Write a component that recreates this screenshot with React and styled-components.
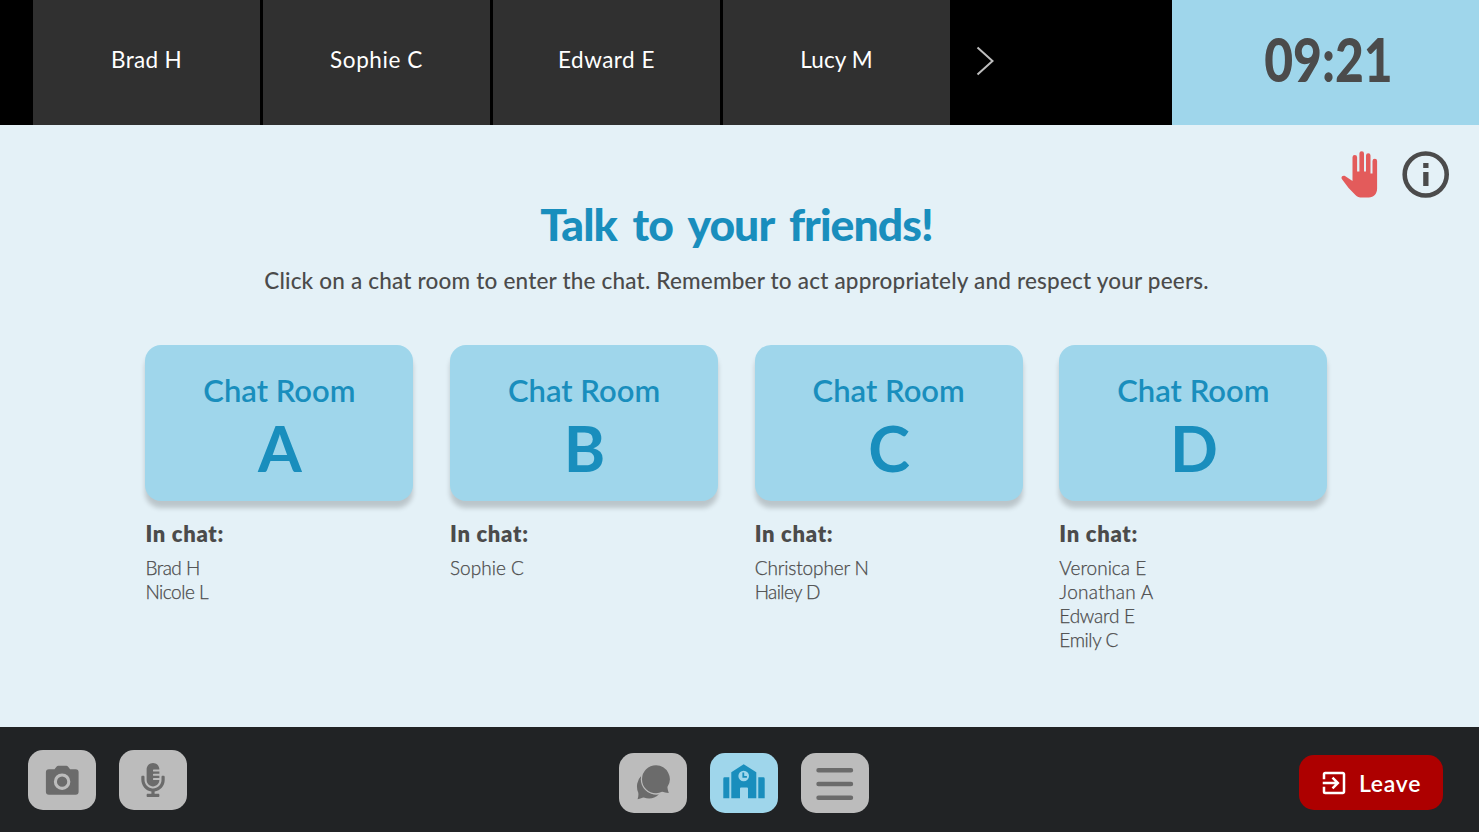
import React from "react";
import styled, { createGlobalStyle } from "styled-components";
import { FaMicrophoneAlt } from "react-icons/fa";
import { MdOutlineExitToApp } from "react-icons/md";

const blue = "#198ebd";
const sky = "#9fd6eb";
const ink = "#4b4b4b";

const GlobalStyle = createGlobalStyle`
  * { box-sizing: border-box; }
  body { margin: 0; background: #e4f1f7; font-family: Lato, "Liberation Sans", sans-serif; }
  h1, h2, p, ul { margin: 0; padding: 0; font-weight: inherit; }
  button { border: 0; padding: 0; font: inherit; cursor: pointer; }
  svg { display: block; }
`;

const Screen = styled.div`
  width: 100%;
  height: 832px;
  display: flex;
  flex-direction: column;
  overflow: hidden;
`;

const TopBar = styled.header`
  height: 125px;
  flex: none;
  display: flex;
  background: #000;
  padding-left: 33px;
`;

const Participants = styled.div`
  display: flex;
  gap: 3px;
`;

const Participant = styled.div`
  width: 227px;
  display: flex;
  align-items: center;
  justify-content: center;
  padding-bottom: 6px;
  background: #303030;
  color: #fff;
  font-size: 22.5px;
  letter-spacing: ${(p) => p.$spacing}px;
  white-space: nowrap;
`;

const NextButton = styled.button`
  width: 70px;
  height: 121px;
  display: flex;
  align-items: center;
  justify-content: center;
  background: none;
`;

const Clock = styled.div`
  width: 307px;
  margin-left: auto;
  display: flex;
  align-items: center;
  justify-content: center;
  padding: 0 0 7px 6px;
  background: ${sky};
  color: ${ink};
  font-size: 60px;
  font-weight: 900;
`;

const Digits = styled.span`
  transform: scaleX(0.83);
`;

const Main = styled.main`
  flex: 1;
  display: flex;
  flex-direction: column;
`;

const Actions = styled.div`
  height: 73px;
  padding: 26px 29px 0 0;
  display: flex;
  justify-content: flex-end;
  gap: 24px;
`;

const Title = styled.h1`
  margin-right: 6px;
  height: 58px;
  line-height: 51px;
  text-align: center;
  color: ${blue};
  font-size: 44.5px;
  font-weight: 900;
  letter-spacing: -0.95px;
  word-spacing: 6px;
  white-space: nowrap;
`;

const Subtitle = styled.p`
  margin-right: 6px;
  height: 89px;
  line-height: 50px;
  text-align: center;
  color: ${ink};
  font-size: 22.5px;
  font-weight: 500;
  letter-spacing: 0.2px;
  white-space: nowrap;
`;

const Rooms = styled.div`
  display: grid;
  grid-template-columns: repeat(4, 268px);
  column-gap: 36.67px;
  padding-left: 145.4px;
`;

const Room = styled.section`
  display: flex;
  flex-direction: column;
`;

const RoomCard = styled.button`
  height: 156px;
  border-radius: 16px;
  background: ${sky};
  box-shadow: 0 7px 5px rgba(0, 0, 0, 0.18);
  color: ${blue};
  display: flex;
  flex-direction: column;
  align-items: center;
  padding-top: 25px;
`;

const RoomLabel = styled.span`
  height: 42px;
  line-height: 40px;
  font-size: 31px;
  font-weight: 600;
`;

const RoomLetter = styled.span`
  line-height: 71px;
  font-size: 63px;
  font-weight: 700;
  padding-left: 1px;
`;

const InChat = styled.h2`
  margin-top: 19px;
  line-height: 28px;
  color: ${ink};
  font-size: 22px;
  font-weight: 800;
  letter-spacing: 0.7px;
`;

const Members = styled.ul`
  margin-top: 8px;
  list-style: none;
  color: ${ink};
  font-size: 19px;
  font-weight: 300;
  line-height: 24.1px;
  -webkit-text-stroke: 0.25px ${ink};
`;

const Member = styled.li`
  letter-spacing: ${(p) => p.$spacing}px;
`;

const BottomBar = styled.footer`
  height: 105px;
  flex: none;
  display: grid;
  grid-template-columns: 591.3px auto 1fr;
  align-items: start;
  background: #212325;
  padding: 23px 36px 0 28px;
`;

const Group = styled.div`
  display: flex;
  gap: 23px;
  padding-top: ${(p) => p.$drop || 0}px;
  justify-content: ${(p) => p.$align || "flex-start"};
`;

const ToolButton = styled.button`
  width: 68px;
  height: 60px;
  border-radius: 15px;
  display: flex;
  align-items: center;
  justify-content: center;
  background: ${(p) => (p.$active ? sky : "#bcbcbc")};
  color: ${(p) => (p.$active ? blue : "#6b6b6b")};
`;

const LeaveButton = styled.button`
  width: 144px;
  height: 55px;
  border-radius: 15px;
  display: flex;
  align-items: center;
  padding-left: 20px;
  gap: 10px;
  background: #ad0000;
  color: #fff;
  font-size: 23px;
  font-weight: 600;
  letter-spacing: 0.7px;
`;

const HandIcon = () => (
  <svg width="37" height="47" viewBox="0 0 37 47" fill="#e35b5b">
    <path d="M11.500 27.500V6.200a2.300 2.300 0 0 1 4.600 0V20.500h2.300V2.600a2.300 2.300 0 0 1 4.600 0V20.500h2V4.600a2.250 2.250 0 0 1 4.500 0V22.500h2V10a2.300 2.300 0 0 1 4.600 0V37.500c0 5.200-3.400 9-8.300 9H21c-2.800 0-4.700-.7-6.600-2.600L7.600 37 1 28.200C-.5 26.200 1.600 24 4 25l7.500 5z" />
  </svg>
);

const InfoIcon = () => (
  <svg width="48" height="48" viewBox="0 0 48 48" fill={ink}>
    <circle cx="23.700" cy="23.500" r="21" fill="none" stroke={ink} strokeWidth="4.600" />
    <path d="M21.200 12h5.300v5h-5.300zM21.200 21h5.300v14h-5.300z" />
  </svg>
);

const ChevronIcon = () => (
  <svg width="18" height="30" viewBox="0 0 18 30" fill="none" stroke="#bdbdbd" strokeWidth="2">
    <path d="M1.500 1.500 16.500 15 1.500 28.500" />
  </svg>
);

const CameraIcon = () => (
  <svg width="34" height="30" viewBox="-0.7 -0.7 34 30" fill="currentColor">
    <path d="M3.200 3.500h5.600L11 .8c.4-.5.9-.8 1.600-.8h8c.7 0 1.200.3 1.600.8l2.200 2.700h5.500a3 3 0 0 1 3 3V26a3 3 0 0 1-3 3H3.200a3 3 0 0 1-3-3V6.500a3 3 0 0 1 3-3z" />
    <circle cx="16.400" cy="16" r="6.700" fill="none" stroke="#bcbcbc" strokeWidth="3.100" />
  </svg>
);

const ChatIcon = () => (
  <svg width="34" height="35" viewBox="0 0 34 35" fill="currentColor">
    <path d="M5.500 10.500A15.500 15.500 0 0 0 2.200 27.500C2.700 29.500 2.300 31.500 1.600 34.300c3-.2 4.200-1.700 6.200-1.700 5 1.600 10.500 1.400 15.200-3.300C13 30.500 4.800 23 5.500 10.500z" />
    <circle cx="20" cy="14.200" r="15.200" fill="#bcbcbc" />
    <path d="M20 .2a14 14 0 0 0-14 14C6 22.500 12.500 28.200 20 28.200c2.200 0 4.200-.5 6-1.400 2 .2 4 1.200 6.800 1.200-.9-2.300-1.200-4.400-1.400-6A14 14 0 0 0 20 .2z" />
  </svg>
);

const SchoolIcon = () => (
  <svg width="42" height="37" viewBox="0 0 42 37" fill="currentColor">
    <path d="M1.700 13.300h4.600V34.300H.3V14.700a1.400 1.400 0 0 1 1.400-1.400zM35.300 13.300h5a1.400 1.400 0 0 1 1.400 1.400V34.300h-6.400z" />
    <path d="M8.300 8.300 20.700.3 33.300 8.300V34.300H25V24.400a1 1 0 0 0-1-1h-6a1 1 0 0 0-1 1v9.900H8.300z" />
    <circle cx="20.700" cy="12" r="5.300" fill={sky} />
    <path d="M20.300 8.500v4.400h3.600" fill="none" stroke={blue} strokeWidth="1.800" />
  </svg>
);

const MenuIcon = () => (
  <svg width="38" height="34" viewBox="0 1 38 34" stroke="currentColor" strokeWidth="4.400" strokeLinecap="round">
    <path d="M2.500 5.300h32.500M2.500 19h32.500M2.500 32.700h32.500" />
  </svg>
);

const participants = [
  { name: "Brad H", spacing: 0.3 },
  { name: "Sophie C", spacing: 0.6 },
  { name: "Edward E", spacing: 0.5 },
  { name: "Lucy M", spacing: 0.1 },
];

const rooms = [
  { letter: "A", members: [["Brad H", -0.5], ["Nicole L", -0.5]] },
  { letter: "B", members: [["Sophie C", 0]] },
  { letter: "C", members: [["Christopher N", -0.15], ["Hailey D", -0.6]] },
  {
    letter: "D",
    members: [["Veronica E", 0], ["Jonathan A", 0.3], ["Edward E", -0.25], ["Emily C", -0.4]],
  },
];

export default function App() {
  return (
    <Screen>
      <GlobalStyle />
      <TopBar>
        <Participants>
          {participants.map((p) => (
            <Participant key={p.name} $spacing={p.spacing}>{p.name}</Participant>
          ))}
        </Participants>
        <NextButton aria-label="Next"><ChevronIcon /></NextButton>
        <Clock><Digits>09:21</Digits></Clock>
      </TopBar>
      <Main>
        <Actions>
          <HandIcon />
          <InfoIcon />
        </Actions>
        <Title>Talk to your friends!</Title>
        <Subtitle>
          Click on a chat room to enter the chat. Remember to act appropriately and respect your peers.
        </Subtitle>
        <Rooms>
          {rooms.map((room) => (
            <Room key={room.letter}>
              <RoomCard>
                <RoomLabel>Chat Room</RoomLabel>
                <RoomLetter>{room.letter}</RoomLetter>
              </RoomCard>
              <InChat>In chat:</InChat>
              <Members>
                {room.members.map(([name, spacing]) => (
                  <Member key={name} $spacing={spacing}>{name}</Member>
                ))}
              </Members>
            </Room>
          ))}
        </Rooms>
      </Main>
      <BottomBar>
        <Group>
          <ToolButton aria-label="Camera"><CameraIcon /></ToolButton>
          <ToolButton aria-label="Microphone"><FaMicrophoneAlt size={34} /></ToolButton>
        </Group>
        <Group $drop={2.5}>
          <ToolButton aria-label="Chat"><ChatIcon /></ToolButton>
          <ToolButton aria-label="School" $active><SchoolIcon /></ToolButton>
          <ToolButton aria-label="Menu"><MenuIcon /></ToolButton>
        </Group>
        <Group $drop={5} $align="flex-end">
          <LeaveButton>
            <MdOutlineExitToApp size={30} />
            Leave
          </LeaveButton>
        </Group>
      </BottomBar>
    </Screen>
  );
}
